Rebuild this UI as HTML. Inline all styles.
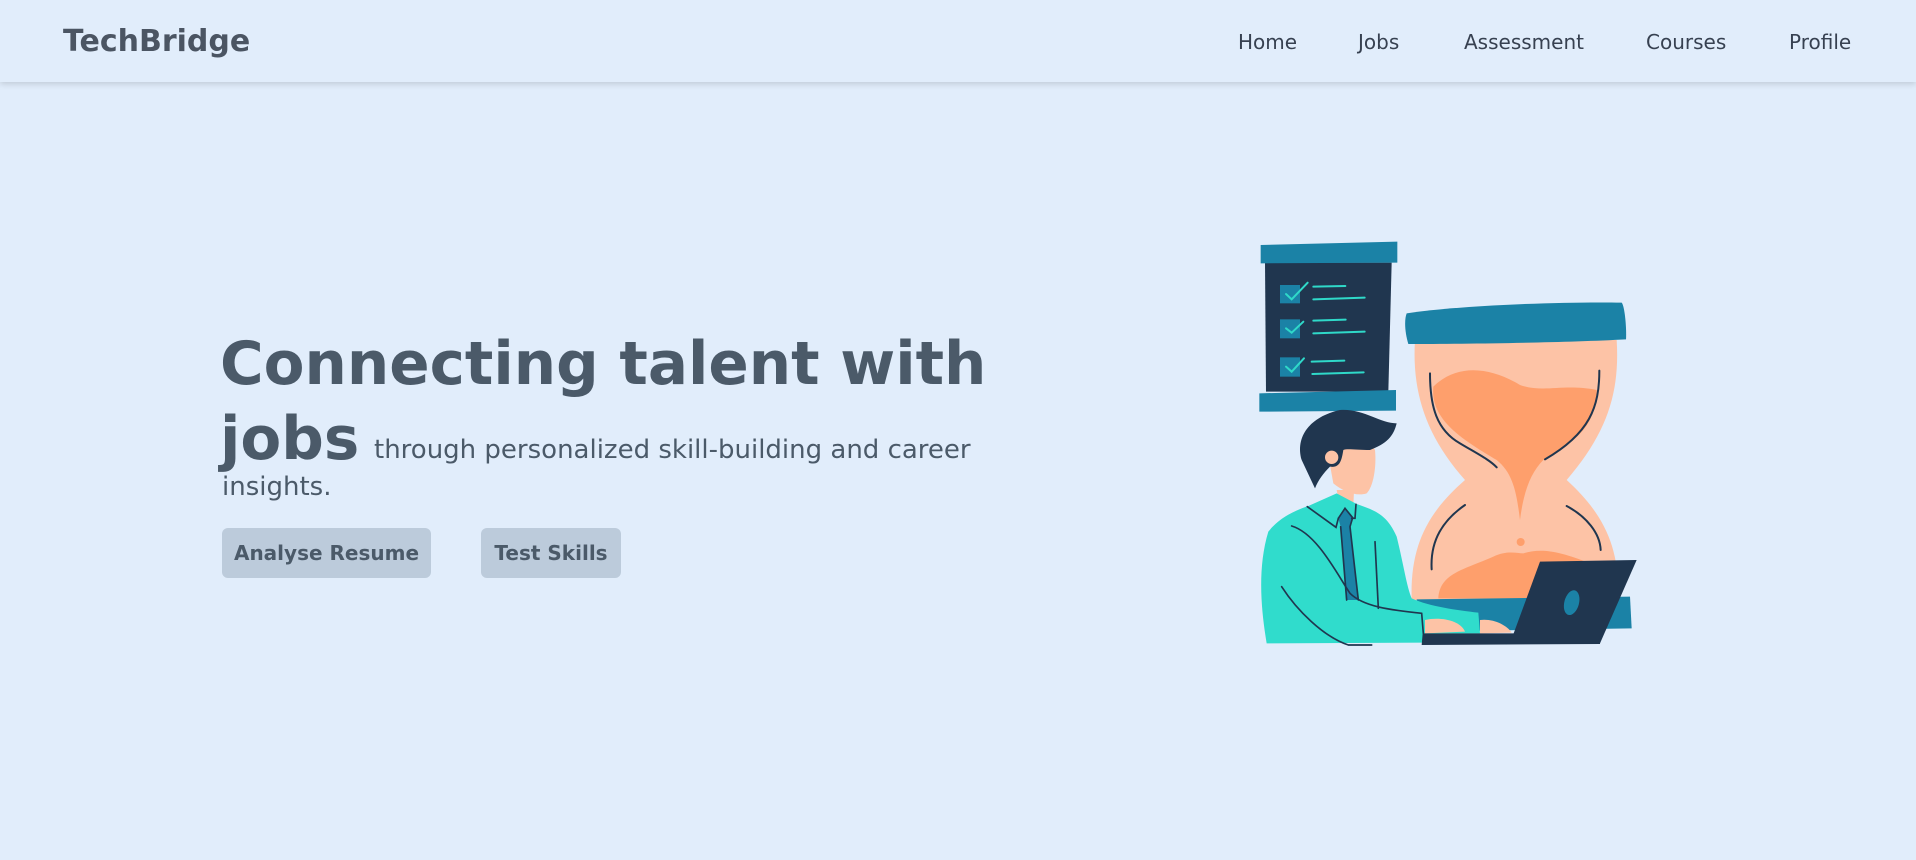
<!DOCTYPE html>
<html><head><meta charset="utf-8"><style>
*{margin:0;padding:0;box-sizing:border-box}
body{width:1916px;height:860px;background:#e1edfb;font-family:"DejaVu Sans",sans-serif;color:#4b5a69;position:relative;overflow:hidden}
.nav{position:absolute;left:0;top:0;width:1916px;height:82px;background:#e1edfb;box-shadow:0 2px 6px rgba(0,0,0,.15)}
.logo{position:absolute;left:63px;top:24px;font-weight:bold;font-size:30px;color:#4b5563}
.nav a{position:absolute;top:30px;font-size:20px;color:#374151;text-decoration:none}
.t{position:absolute;white-space:nowrap}
.h{font-weight:bold;font-size:59.5px;color:#4b5a69}
.s{font-size:26px;color:#4b5a69}
.btn{position:absolute;top:528px;height:50px;background:#bccbdb;border-radius:6px;font-weight:bold;font-size:20px;color:#4b5a69;display:flex;align-items:center;justify-content:center}
</style></head><body>
<div class="nav">
<div class="logo">TechBridge</div>
<a style="left:1238px">Home</a>
<a style="left:1358px">Jobs</a>
<a style="left:1464px">Assessment</a>
<a style="left:1646px">Courses</a>
<a style="left:1789px">Profile</a>
</div>
<div class="t h" style="left:220px;top:325px;line-height:80px">Connecting talent with</div>
<div class="t h" style="left:220px;top:400px;line-height:80px">jobs</div>
<div class="t s" style="left:374px;top:432px;line-height:36px">through personalized skill-building and career</div>
<div class="t s" style="left:222px;top:469px;line-height:36px">insights.</div>
<div class="btn" style="left:222px;width:209px">Analyse Resume</div>
<div class="btn" style="left:481px;width:140px">Test Skills</div>

<svg style="position:absolute;left:1230px;top:220px" width="430" height="440" viewBox="0 0 1290 1320">
<polygon points="105,128 485,128 475,515 108,515" fill="#20364f"/>
<polygon points="92,75 502,65 502,128 92,130" fill="#1b82a6"/>
<polygon points="88,520 498,510 498,572 88,575" fill="#1b82a6"/>
<g fill="#1b82a6"><rect x="150" y="195" width="60" height="55"/><rect x="150" y="298" width="60" height="57"/><rect x="150" y="412" width="60" height="58"/></g>
<g stroke="#2fd9c9" stroke-width="6" fill="none" stroke-linecap="round">
<polyline points="168,222 185,238 233,188"/><polyline points="168,325 185,338 220,305"/><polyline points="168,440 185,455 222,415"/>
<line x1="250" y1="200" x2="346" y2="198"/><line x1="250" y1="238" x2="404" y2="233"/>
<line x1="250" y1="302" x2="347" y2="299"/><line x1="250" y1="340" x2="404" y2="335"/>
<line x1="245" y1="425" x2="343" y2="422"/><line x1="247" y1="462" x2="401" y2="457"/>
</g>
<path d="M555,360 L1160,360 C1170,520 1130,640 1010,780 C1120,880 1170,980 1165,1140 L545,1140 C540,980 590,880 705,780 C590,650 545,520 555,360 Z" fill="#fdc3a6"/>
<path d="M610,500 C680,430 780,440 870,495 C940,520 1000,490 1100,510 C1100,640 1000,680 940,720 C900,760 880,820 870,900 C860,820 850,760 800,720 C700,660 600,600 610,500 Z" fill="#fe9f6c"/>
<path d="M625,1135 C630,1060 700,1050 790,1010 C830,990 860,1000 880,1000 C930,985 980,990 1080,1030 L1120,1135 Z" fill="#fe9f6c"/>
<circle cx="872" cy="966" r="12" fill="#fe9f6c"/>
<path d="M530,280 C700,255 1000,245 1175,248 C1185,260 1190,330 1188,358 C1000,368 700,372 535,372 C525,340 522,300 530,280 Z" fill="#1b82a6"/>
<path d="M560,1138 L1200,1130 L1205,1225 L560,1235 Z" fill="#1b82a6"/>
<g stroke="#20364f" stroke-width="6" fill="none" stroke-linecap="round">
<path d="M600,460 C600,560 620,630 690,670 C740,700 780,720 800,742"/>
<path d="M1108,452 C1108,560 1080,640 945,718"/>
<path d="M705,855 C640,900 600,960 605,1048"/>
<path d="M1010,858 C1070,890 1110,940 1112,990"/>
</g>
<path d="M320,810 L330,860 L370,860 L372,810 Z" fill="#fdc3a6"/>
<path d="M290,680 C330,660 420,660 435,690 C440,740 430,800 410,820 C380,830 340,815 310,790 Z" fill="#fdc3a6"/>
<path d="M215,720 C195,650 240,590 330,570 C400,565 450,610 500,610 C490,650 470,670 420,690 C380,690 350,685 340,690 C335,720 330,745 300,740 C280,760 265,780 255,805 Z" fill="#20364f"/>
<circle cx="305" cy="712" r="20" fill="#fdc3a6"/>
<path d="M115,935 C150,890 200,870 235,858 L320,820 L380,852 C430,870 470,880 500,950 C520,1030 530,1100 545,1135 C600,1160 680,1170 745,1178 L750,1240 L580,1240 L580,1268 L110,1270 C95,1180 80,1050 115,935 Z" fill="#30dccc"/>
<path d="M325,895 L345,865 L368,893 L360,920 L385,1140 L348,1140 L332,920 Z" fill="#1b82a6"/>
<g stroke="#20364f" stroke-width="5" fill="none" stroke-linecap="round">
<path d="M232,860 L318,922 L325,895"/><path d="M378,853 L375,895 L365,895"/>
<path d="M185,918 C260,940 320,1060 360,1120 C400,1160 480,1170 575,1180 L580,1240"/>
<path d="M155,1100 C200,1170 280,1250 355,1275 L425,1275"/>
<path d="M435,965 L445,1165"/>
<path d="M325,895 L345,865 L368,893 L360,920 L385,1140"/>
<path d="M332,920 L350,1140"/>
</g>
<path d="M585,1200 C630,1190 690,1200 705,1235 L585,1240 Z" fill="#fdc3a6"/>
<path d="M750,1200 C790,1195 830,1215 845,1238 L750,1240 Z" fill="#fdc3a6"/>
<polygon points="930,1025 1220,1020 1110,1270 840,1270" fill="#20364f"/>
<polygon points="578,1240 1110,1240 1110,1272 575,1275" fill="#20364f"/>
<ellipse cx="1025" cy="1148" rx="22" ry="38" transform="rotate(15 1025 1148)" fill="#1b82a6"/>
</svg>
</body></html>
